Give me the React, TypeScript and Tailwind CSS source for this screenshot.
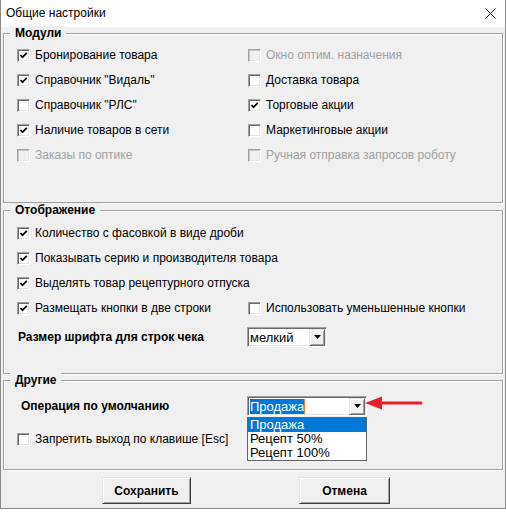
import type { ReactNode } from 'react';

const FONT = "font-['Liberation_Sans',Arial,sans-serif]";

/** Classic sunken 13px checkbox. */
function CheckBox({ checked = false, disabled = false }: { checked?: boolean; disabled?: boolean }) {
  return (
    <span
      className={`flex h-[13px] w-[13px] shrink-0 items-center justify-center border border-t-[#a0a0a0] border-l-[#a0a0a0] border-b-white border-r-white ${
        disabled
          ? 'bg-[#f0f0f0] shadow-[inset_1px_1px_0_#c8c8c8,inset_-1px_-1px_0_#e8e8e8]'
          : 'bg-white shadow-[inset_1px_1px_0_#696969,inset_-1px_-1px_0_#e3e3e3]'
      }`}
    >
      {checked && (
        <svg width="11" height="11" viewBox="0 0 11 11">
          <polyline points="2.5,5 4.5,7.2 8.8,2.8" fill="none" stroke="#000" strokeWidth="1.7" />
        </svg>
      )}
    </span>
  );
}

function Option({
  label,
  checked,
  disabled,
}: {
  label: string;
  checked?: boolean;
  disabled?: boolean;
}) {
  return (
    <div className="flex h-[25px] items-center gap-[5px]">
      <CheckBox checked={checked} disabled={disabled} />
      <span className={`text-[12px] leading-[15px] ${disabled ? 'text-[#a0a0a0]' : 'text-black'}`}>
        {label}
      </span>
    </div>
  );
}

function Group({ title, className, children }: { title: string; className: string; children: ReactNode }) {
  return (
    <div
      className={`relative border border-[#a0a0a0] shadow-[inset_1px_1px_0_#fff,1px_1px_0_#fff] ${className}`}
    >
      <div className="-mt-[8px] ml-[6px] w-fit bg-[#f0f0f0] px-[5px] text-[12px] font-bold leading-[15px]">
        {title}
      </div>
      {children}
    </div>
  );
}

function DropButton() {
  return (
    <span className="flex h-[17px] w-[16px] items-center justify-center border border-t-[#e3e3e3] border-l-[#e3e3e3] border-b-[#696969] border-r-[#696969] bg-[#f0f0f0] shadow-[inset_1px_1px_0_#fff,inset_-1px_-1px_0_#a0a0a0]">
      <svg width="7" height="4" viewBox="0 0 7 4">
        <polygon points="0,0 7,0 3.5,4" fill="#000" />
      </svg>
    </span>
  );
}

function ComboField({ width, children }: { width: string; children: ReactNode }) {
  return (
    <div
      className={`flex h-[20px] ${width} items-center justify-between border border-t-[#a0a0a0] border-l-[#a0a0a0] border-b-white border-r-white bg-white pl-[2px] pr-[1px] shadow-[inset_1px_1px_0_#696969,inset_-1px_-1px_0_#e3e3e3]`}
    >
      {children}
      <DropButton />
    </div>
  );
}

function WinButton({ label, width }: { label: string; width: string }) {
  return (
    <button
      className={`h-[27px] ${width} border border-t-[#e3e3e3] border-l-[#e3e3e3] border-b-[#3c3c3c] border-r-[#3c3c3c] bg-[#f0f0f0] text-[12px] font-bold shadow-[inset_1px_1px_0_#fff,inset_-1px_-1px_0_#a0a0a0]`}
    >
      {label}
    </button>
  );
}

export default function App() {
  return (
    <div className={`h-[514px] w-[506px] overflow-hidden bg-white text-black ${FONT}`}>
      <div className="flex h-[509px] flex-col border-x border-b border-[#8a8a8a] bg-[#f0f0f0]">
        <div className="flex h-[27px] shrink-0 items-center justify-between bg-white pl-[5px] pr-[9px]">
          <span className="text-[12px] leading-[15px]">Общие настройки</span>
          <svg width="11" height="11" viewBox="0 0 11 11">
            <path d="M0.5 0.5 L10.5 10.5 M10.5 0.5 L0.5 10.5" stroke="#111" strokeWidth="1" />
          </svg>
        </div>

        <div className="flex flex-1 flex-col px-[2px]">
          <Group title="Модули" className="mt-[6px] h-[170px]">
            <div className="mt-[2px] grid grid-cols-[231px_1fr] pl-[13px]">
              <Option label="Бронирование товара" checked />
              <Option label="Окно оптим. назначения" disabled />
              <Option label={'Справочник "Видаль"'} checked />
              <Option label="Доставка товара" />
              <Option label={'Справочник "РЛС"'} />
              <Option label="Торговые акции" checked />
              <Option label="Наличие товаров в сети" checked />
              <Option label="Маркетинговые акции" />
              <Option label="Заказы по оптике" disabled />
              <Option label="Ручная отправка запросов роботу" disabled />
            </div>
          </Group>

          <Group title="Отображение" className="mt-[7px] h-[164px]">
            <div className="mt-[3px] grid grid-cols-[231px_1fr] pl-[13px]">
              <div className="col-span-2">
                <Option label="Количество с фасовкой в виде дроби" checked />
              </div>
              <div className="col-span-2">
                <Option label="Показывать серию и производителя товара" checked />
              </div>
              <div className="col-span-2">
                <Option label="Выделять товар рецептурного отпуска" checked />
              </div>
              <Option label="Размещать кнопки в две строки" checked />
              <Option label="Использовать уменьшенные кнопки" />
            </div>
            <div className="mt-[6px] flex items-center pl-[14px]">
              <span className="w-[229px] text-[12px] font-bold leading-[15px]">
                Размер шрифта для строк чека
              </span>
              <ComboField width="w-[80px]">
                <span className="text-[13px] leading-[15px]">мелкий</span>
              </ComboField>
            </div>
          </Group>

          <Group title="Другие" className="mt-[6px] h-[90px]">
            <div className="mt-[8px] flex items-center pl-[17px]">
              <span className="w-[226px] text-[12px] font-bold leading-[15px]">
                Операция по умолчанию
              </span>
              <div className="relative">
                <ComboField width="w-[120px]">
                  <span className="flex items-center">
                    <span className="bg-[#0078d7] text-[13px] leading-[15px] text-white">Продажа</span>
                    <span className="h-[15px] w-[1px] bg-[#f08020]" />
                  </span>
                </ComboField>
                <div className="absolute left-0 top-[21px] z-10 w-[120px] border border-[#646464] bg-white">
                  <div className="h-[14px] bg-[#0078d7] pl-[2px] text-[13px] leading-[14px] text-white">
                    Продажа
                  </div>
                  <div className="h-[14px] pl-[2px] text-[13px] leading-[14px]">Рецепт 50%</div>
                  <div className="h-[14px] pl-[2px] text-[13px] leading-[14px]">Рецепт 100%</div>
                </div>
              </div>
            </div>
            <div className="mt-[16px] flex items-center gap-[5px] pl-[13px]">
              <CheckBox />
              <span className="text-[12px] leading-[15px]">Запретить выход по клавише [Esc]</span>
            </div>
            {/* annotation arrow pointing at the combo's drop button */}
            <svg
              className="absolute left-[360px] top-[12px]"
              width="62"
              height="20"
              viewBox="0 0 62 20"
            >
              <line x1="16" y1="10" x2="57" y2="10" stroke="#e8202a" strokeWidth="3" strokeLinecap="round" />
              <polygon points="1,10 18,3.5 18,16.5" fill="#e8202a" />
            </svg>
          </Group>

          <div className="mt-[7px] flex gap-[108px] pl-[99px]">
            <WinButton label="Сохранить" width="w-[89px]" />
            <WinButton label="Отмена" width="w-[91px]" />
          </div>
        </div>
      </div>
    </div>
  );
}
